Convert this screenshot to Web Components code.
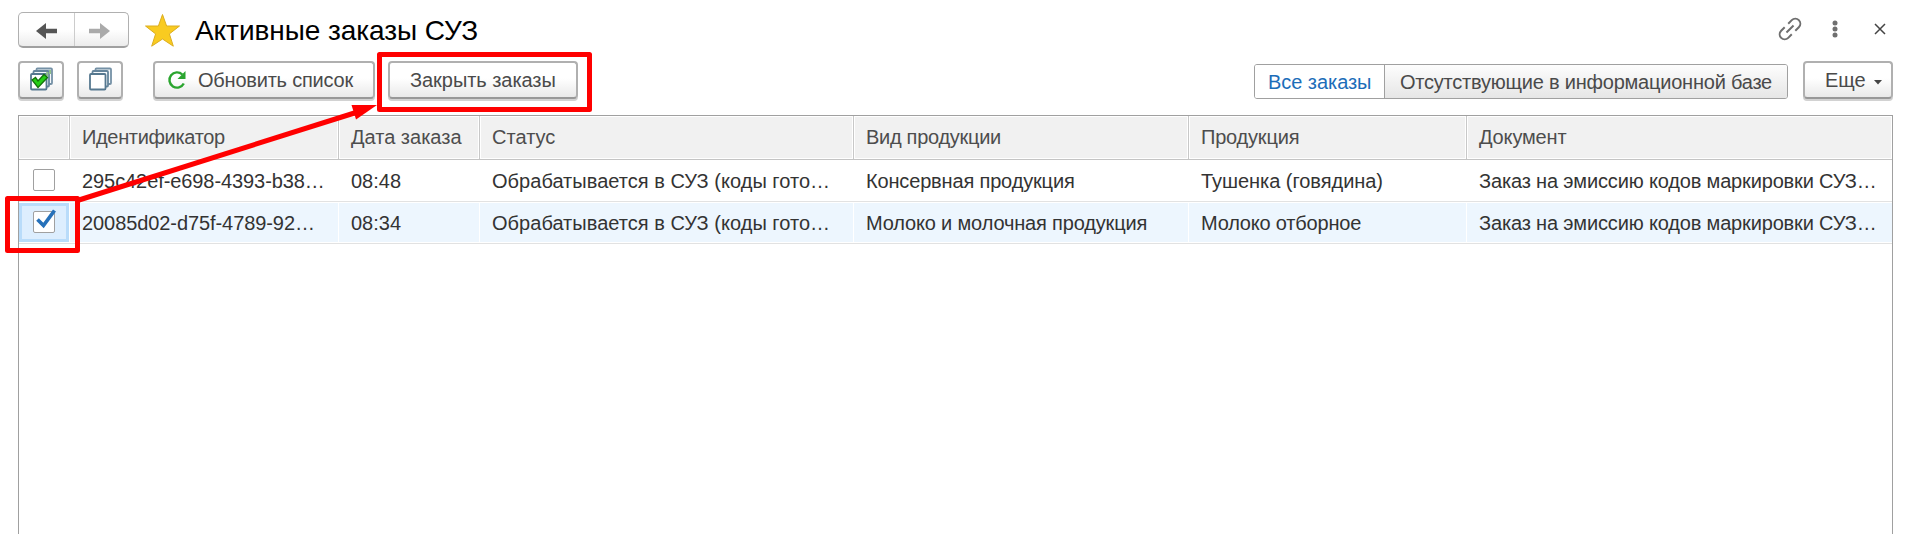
<!DOCTYPE html>
<html lang="ru">
<head>
<meta charset="utf-8">
<title>Активные заказы СУЗ</title>
<style>
html,body{margin:0;height:100%;overflow:hidden;background:#fff}
body{font-family:"Liberation Sans",Arial,sans-serif;font-size:20px;color:#333}
</style>
</head>
<body>
<orders-page></orders-page>
<script>
function define(name, html) {
  const t = document.createElement('template');
  t.innerHTML = html;
  customElements.define(name, class extends HTMLElement {
    constructor() {
      super();
      this.attachShadow({ mode: 'open' }).append(t.content.cloneNode(true));
    }
  });
}

define('push-button', `<style>
:host{display:flex;box-sizing:border-box;height:38px;border:2px solid #b0b0b0;border-bottom-color:#989898;border-radius:4px;background:linear-gradient(#fff 45%,#e9e9e9);box-shadow:0 2px 0 #d2d2d2;color:#4a4a4a;align-items:center;white-space:nowrap;line-height:24px}
</style><slot></slot>`);

define('nav-buttons', `<style>
:host{display:flex;box-sizing:border-box;width:111px;height:36px;border:1px solid #b0b0b0;border-bottom:2px solid #a0a0a0;border-radius:5px;background:linear-gradient(#fff 50%,#ececec)}
svg{display:block}
</style><svg width="109" height="33"><path d="M55.5 0V33" stroke="#ccc"/>
<path d="M17 18L27 10V15.7H38V20.3H27V26Z" fill="#555"/><path d="M91 18L81 10V15.7H70V20.3H81V26Z" fill="#aaa"/></svg>`);

define('window-bar', `<style>
:host{display:flex;height:61px;padding:0 0 0 18px;box-sizing:border-box;align-items:flex-start}
nav-buttons{margin-top:12px}
.star{margin:12px 0 0 15px;flex:none}
h1{font-weight:400;font-size:28px;line-height:32px;margin:15px 0 0 14px;color:#000;white-space:nowrap;flex:1;letter-spacing:-.06px}
.tools{margin:10px 19px 0 0;flex:none}
</style>
<nav-buttons></nav-buttons>
<svg class="star" width="37" height="37"><path d="M18.5 2.5L22.6 14H35.5L25.4 21.9L29.3 34.2L18.5 27L7.7 34.2L11.6 21.9L1.5 14H14.4Z" fill="#f9cb20" stroke="#dcae20"/></svg>
<h1><slot></slot></h1>
<svg class="tools" width="130" height="50" fill="none" stroke="#6f6f6f" stroke-width="2"><g transform="translate(20 19) rotate(-45)"><path d="M-2.500 -5H-7.500A5 5 0 0 0 -7.500 5H-2.500M2.500 -5H7.500A5 5 0 0 1 7.500 5H2.500M-5 0H5"/></g>
<g fill="#6f6f6f" stroke="none"><circle cx="65" cy="13" r="2.500"/><circle cx="65" cy="19" r="2.500"/><circle cx="65" cy="25" r="2.500"/></g><path d="M105 14L115 24M115 14L105 24" stroke="#444" stroke-width="1.500"/></svg>`);

define('view-switch', `<style>
:host{display:flex;box-sizing:border-box;width:534px;height:35px;border:1px solid #a0a0a0;border-radius:3px;overflow:hidden;line-height:24px;white-space:nowrap;color:#4a4a4a}
.on{width:130px;box-sizing:border-box;padding:5px 0 0 13px;color:#1c6db9;background:#fff;border-right:1px solid #a0a0a0;letter-spacing:-.05px}
.off{flex:1;padding:5px 0 0 15px;background:linear-gradient(#fdfdfd,#e6e6e6);letter-spacing:-.22px}
</style><div class="on"><slot name="on"></slot></div><div class="off"><slot name="off"></slot></div>`);

define('command-bar', `<style>
:host{display:flex;height:54px;padding-left:18px;box-sizing:border-box}
push-button{flex:none}
.a,.b{width:46px;margin-right:13px}.b{margin-right:30px}
.r{width:222px;margin-right:13px;letter-spacing:-.22px}.c{width:190px}
.r svg{margin:0 11px 0 12px}.c span{margin-left:20px;letter-spacing:-.05px}
view-switch{margin:3px 15px 0 auto}
.m{width:90px;margin-right:26px}.m span{margin-left:20px}.m svg{margin:4px 0 0 8px}
</style>
<push-button class="a"><svg width="42" height="34"><g fill="#f4f8fb" stroke="#56788f" stroke-width="1.800"><rect x="16.500" y="5.500" width="15.500" height="15.500" rx="1" stroke="#7591a6"/><rect x="13.500" y="8" width="15.500" height="15.500" rx="1" stroke="#64849b"/><rect x="11" y="11" width="15.500" height="15.500" rx="1" fill="#fff"/></g><path d="M27.200 9V13M30 7V11" stroke="#8fbf8c" stroke-width="2"/><path d="M12 17L15.500 14.500L18 18L24 11.500L27.500 14.500L18 24.500Z" fill="#25ce16" stroke="#14700c" stroke-width="1.300"/></svg></push-button>
<push-button class="b"><svg width="42" height="34"><g fill="#f4f8fb" stroke="#56788f" stroke-width="1.800"><rect x="16.500" y="5.500" width="15.500" height="15.500" rx="1" stroke="#7591a6"/><rect x="13.500" y="8" width="15.500" height="15.500" rx="1" stroke="#64849b"/><rect x="11" y="11" width="15.500" height="15.500" rx="1" fill="#fff"/></g></svg></push-button>
<push-button class="r"><svg width="20" height="20"><path d="M15.300 4.500A7.600 7.600 0 1 0 16.800 13.500" fill="none" stroke="#2ba52f" stroke-width="2.400"/><path d="M18.500 1V9H10.500Z" fill="#2ba52f"/></svg><span>Обновить список</span></push-button>
<push-button class="c"><span>Закрыть заказы</span></push-button>
<view-switch><span slot="on">Все заказы</span><span slot="off">Отсутствующие в информационной базе</span></view-switch>
<push-button class="m"><span>Еще</span><svg width="8" height="5"><path d="M0 0H8L4 4.500Z" fill="#444"/></svg></push-button>`);

define('check-box', `<style>
:host{display:block;box-sizing:border-box;width:22px;height:22px;border:1px solid #a0a0a0;border-radius:2px;background:#fff}
svg{display:none;margin:-3px 0 0 1px;overflow:visible}
:host([checked]) svg{display:block}
</style><svg width="22" height="22"><path d="M2.500 10.500L8.500 16.500L19.500 1.500" fill="none" stroke="#2671ba" stroke-width="3.700"/></svg>`);

define('orders-table', `<style>
:host{display:block;box-sizing:border-box;width:1875px;height:430px;margin-left:18px;border:1px solid #a0a0a0;border-bottom:0;line-height:24px}
.row{display:grid;grid-template-columns:50px 269px 141px 374px 335px 278px 1fr;height:41px;border-bottom:1px solid #e2e2e2;box-sizing:border-box}
.row>*{box-sizing:border-box;padding:8px 0 0 12px;border-left:1px solid #fff;white-space:nowrap;overflow:hidden}
.row>:first-child{border-left:0;padding:9px 0 0 14px}
.head{height:44px;border-bottom:1px solid #c4c4c4;color:#4d4d4d}
.head>*{background:#f1f1f1;border-left:1px solid #c8c8c8;box-shadow:inset 1px 1px #fff,inset -1px -1px #fff;padding-top:9px}
.one{height:42px}.one>*{padding-top:9px}
.sel{height:42px;border-top:1px solid #fff}
.sel>*{background:#edf6fe;border-bottom:1px solid #fff}
.sel>:first-child{background:#ddeefe;box-shadow:inset 0 0 0 3px #b9dcfa;padding-top:8px}
.row>:nth-child(2){letter-spacing:-.08px}
.row>:nth-child(4){letter-spacing:.03px}
.row>:nth-child(5),.row>:nth-child(7){letter-spacing:-.16px}
.head>:nth-child(2){letter-spacing:-.34px}
.head>:nth-child(5){letter-spacing:-.28px}
.head>:nth-child(6),.sel>:nth-child(6){letter-spacing:-.2px}
.one>:nth-child(6){letter-spacing:-.04px}
</style>
<div class="row head"><span></span><span>Идентификатор</span><span>Дата заказа</span><span>Статус</span><span>Вид продукции</span><span>Продукция</span><span>Документ</span></div>
<div class="row one"><span><check-box></check-box></span><span>295c42ef-e698-4393-b38…</span><span>08:48</span><span>Обрабатывается в СУЗ (коды гото…</span><span>Консервная продукция</span><span>Тушенка (говядина)</span><span>Заказ на эмиссию кодов маркировки СУЗ…</span></div>
<div class="row sel"><span><check-box checked></check-box></span><span>20085d02-d75f-4789-92…</span><span>08:34</span><span>Обрабатывается в СУЗ (коды гото…</span><span>Молоко и молочная продукция</span><span>Молоко отборное</span><span>Заказ на эмиссию кодов маркировки СУЗ…</span></div>`);

define('callout-marks', `<style>
:host{position:absolute;left:0;top:0}svg{display:block}
</style><svg width="620" height="270"><g fill="none" stroke="#f00" stroke-width="5" stroke-linejoin="round"><rect x="379.500" y="54.500" width="210" height="55"/><rect x="7.500" y="198.500" width="70" height="52"/><path d="M79 200L356 112.500"/></g><path d="M377 105L351.500 105L356 119.500Z" fill="#f00"/></svg>`);

define('orders-page', `<style>:host{display:block;position:relative;height:534px;overflow:hidden}</style>
<window-bar>Активные заказы СУЗ</window-bar><command-bar></command-bar><orders-table></orders-table><callout-marks></callout-marks>`);
</script>
</body>
</html>
